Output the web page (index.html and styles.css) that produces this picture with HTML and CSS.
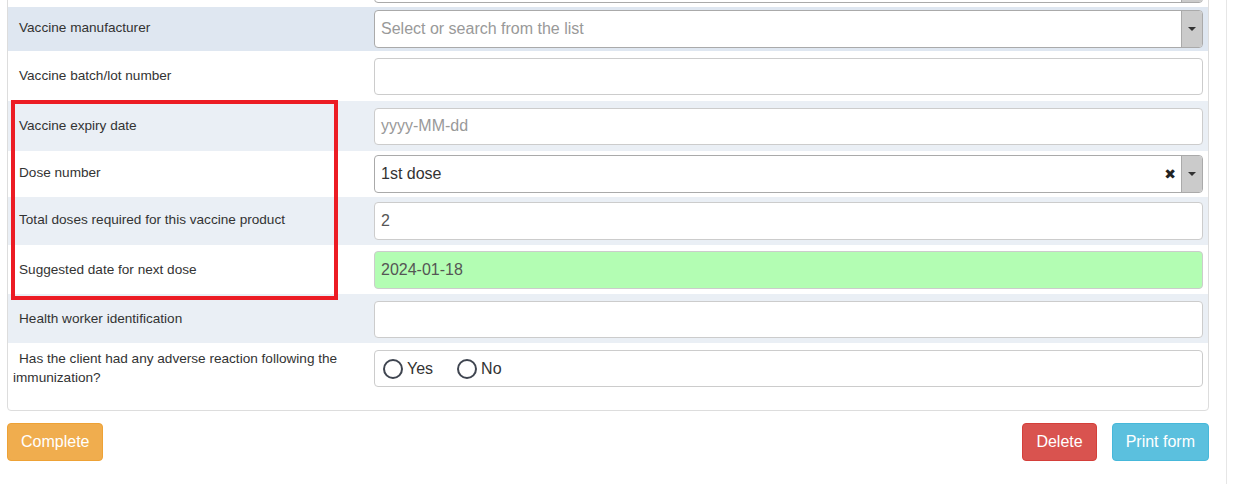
FILE: index.html
```html
<!DOCTYPE html>
<html>
<head>
<meta charset="utf-8">
<link rel="stylesheet" href="styles.css">
</head>
<body>
<div class="page">
  <div class="main">
    <div class="panel">
      <div class="row r0">
        <div class="label"></div>
        <div class="field"><div class="select"><span class="sel-text"></span><span class="arrow"></span></div></div>
      </div>
      <div class="row r1 hl">
        <div class="label">Vaccine manufacturer</div>
        <div class="field"><div class="select"><span class="sel-text ph">Select or search from the list</span><span class="arrow"></span></div></div>
      </div>
      <div class="row r2">
        <div class="label">Vaccine batch/lot number</div>
        <div class="field"><div class="input"></div></div>
      </div>
      <div class="row r3 alt">
        <div class="label">Vaccine expiry date</div>
        <div class="field"><div class="input ph">yyyy-MM-dd</div></div>
      </div>
      <div class="row r4">
        <div class="label up">Dose number</div>
        <div class="field"><div class="select"><span class="sel-text val">1st dose</span><span class="clear">&#10006;</span><span class="arrow"></span></div></div>
      </div>
      <div class="row r5 alt">
        <div class="label up">Total doses required for this vaccine product</div>
        <div class="field"><div class="input">2</div></div>
      </div>
      <div class="row r6">
        <div class="label">Suggested date for next dose</div>
        <div class="field"><div class="input green">2024-01-18</div></div>
      </div>
      <div class="row r7 alt">
        <div class="label">Health worker identification</div>
        <div class="field"><div class="input"></div></div>
      </div>
      <div class="row r8">
        <div class="label multi">Has the client had any adverse reaction following the immunization?</div>
        <div class="field top"><div class="input radios">
          <span class="radio"><span class="circle"></span>Yes</span>
          <span class="radio"><span class="circle"></span>No</span>
        </div></div>
      </div>
    </div>
    <div class="actions">
      <button class="btn btn-warning">Complete</button>
      <div class="right-btns">
        <button class="btn btn-danger">Delete</button>
        <button class="btn btn-info">Print form</button>
      </div>
    </div>
  </div>
  <div class="sidebar"></div>
  <div class="annotation"></div>
</div>
</body>
</html>
```

FILE: styles.css
```css
* { box-sizing: border-box; }
html, body { margin: 0; padding: 0; background: #fff; }
body {
  font-family: "Liberation Sans", Arial, sans-serif;
  color: #333;
  overflow: hidden;
  height: 484px;
}
.page {
  position: relative;
  display: flex;
  height: 484px;
}
.main {
  width: 1209px;
  padding-left: 7px;
  flex: none;
}
.sidebar {
  margin-left: 17px;
  flex: 1;
  border-left: 1px solid #e6e6e6;
}
.panel {
  margin-top: -41px;
  border: 1px solid #ddd;
  border-radius: 4px;
  background: #fff;
  overflow: hidden;
}
.row {
  display: grid;
  grid-template-columns: 358px 1fr;
  column-gap: 8px;
  padding-right: 5px;
  align-items: center;
}
.row.hl { background: #dfe7f1; }
.row.alt { background: #eaeff5; }
.r0 { height: 47px; }
.r1 { height: 44px; padding-bottom: 1px; }
.r2 { height: 50px; padding-top: 1px; }
.r3 { height: 50px; }
.r4 { height: 46px; }
.r5 { height: 48px; }
.r6 { height: 49px; }
.r7 { height: 49px; padding-top: 2px; }
.r8 { height: 67px; align-items: start; padding-top: 6px; }

.label {
  font-size: 13.6px;
  line-height: 19px;
  padding-left: 5px;
  text-indent: 6px;
  color: #333;
  min-height: 19px;
  padding-bottom: 2px;
}
.label.up { padding-bottom: 4px; }
.label.multi { padding-bottom: 0; }
.r6 .label { padding-bottom: 0; }
.field.top { padding-top: 1px; }

.input, .select {
  height: 38px;
  border: 1px solid #ccc;
  border-radius: 4px;
  background: #fff;
  font-size: 16px;
  color: #555;
  padding: 0 6px;
  display: flex;
  align-items: center;
}
.r2 .input, .r3 .input, .r7 .input, .r8 .input { height: 37px; }
.input.ph, .sel-text.ph { color: #999; }
.input.green { background: #b3fdb3; }
.select {
  border-color: #aaa;
  padding-right: 0;
  position: relative;
}
.sel-text { flex: 1; color: #444; }
.sel-text.val { color: #333; }
.arrow {
  width: 21px;
  align-self: stretch;
  background: #cbcbcb;
  border-left: 1px solid #aaa;
  border-radius: 0 3px 3px 0;
  display: flex;
  align-items: center;
  justify-content: center;
}
.arrow::after {
  content: "";
  border-left: 4px solid transparent;
  border-right: 4px solid transparent;
  border-top: 4px solid #333;
}
.clear {
  font-size: 14px;
  font-weight: bold;
  color: #222;
  margin-right: 5px;
  font-family: "DejaVu Sans", sans-serif;
}
.radios { gap: 24px; padding-left: 8px; }
.radio {
  display: flex;
  align-items: center;
  gap: 4px;
  color: #333;
}
.circle {
  width: 20px;
  height: 20px;
  border: 2px solid #3f4550;
  border-radius: 50%;
  display: inline-block;
}

.actions {
  display: flex;
  justify-content: space-between;
  margin-top: 12px;
}
.right-btns { display: flex; gap: 15px; }
.btn {
  height: 38px;
  border: 1px solid transparent;
  border-radius: 4px;
  color: #fff;
  font-family: "Liberation Sans", Arial, sans-serif;
  font-size: 16px;
  padding: 0 13px;
}
.btn-warning { background: #f0ad4e; border-color: #eea236; }
.btn-danger { background: #d9534f; border-color: #d43f3a; }
.btn-info { background: #5bc0de; border-color: #46b8da; }

.annotation {
  position: absolute;
  left: 11px;
  top: 100px;
  width: 327px;
  height: 200px;
  border: 4px solid #ec1c24;
}
```
